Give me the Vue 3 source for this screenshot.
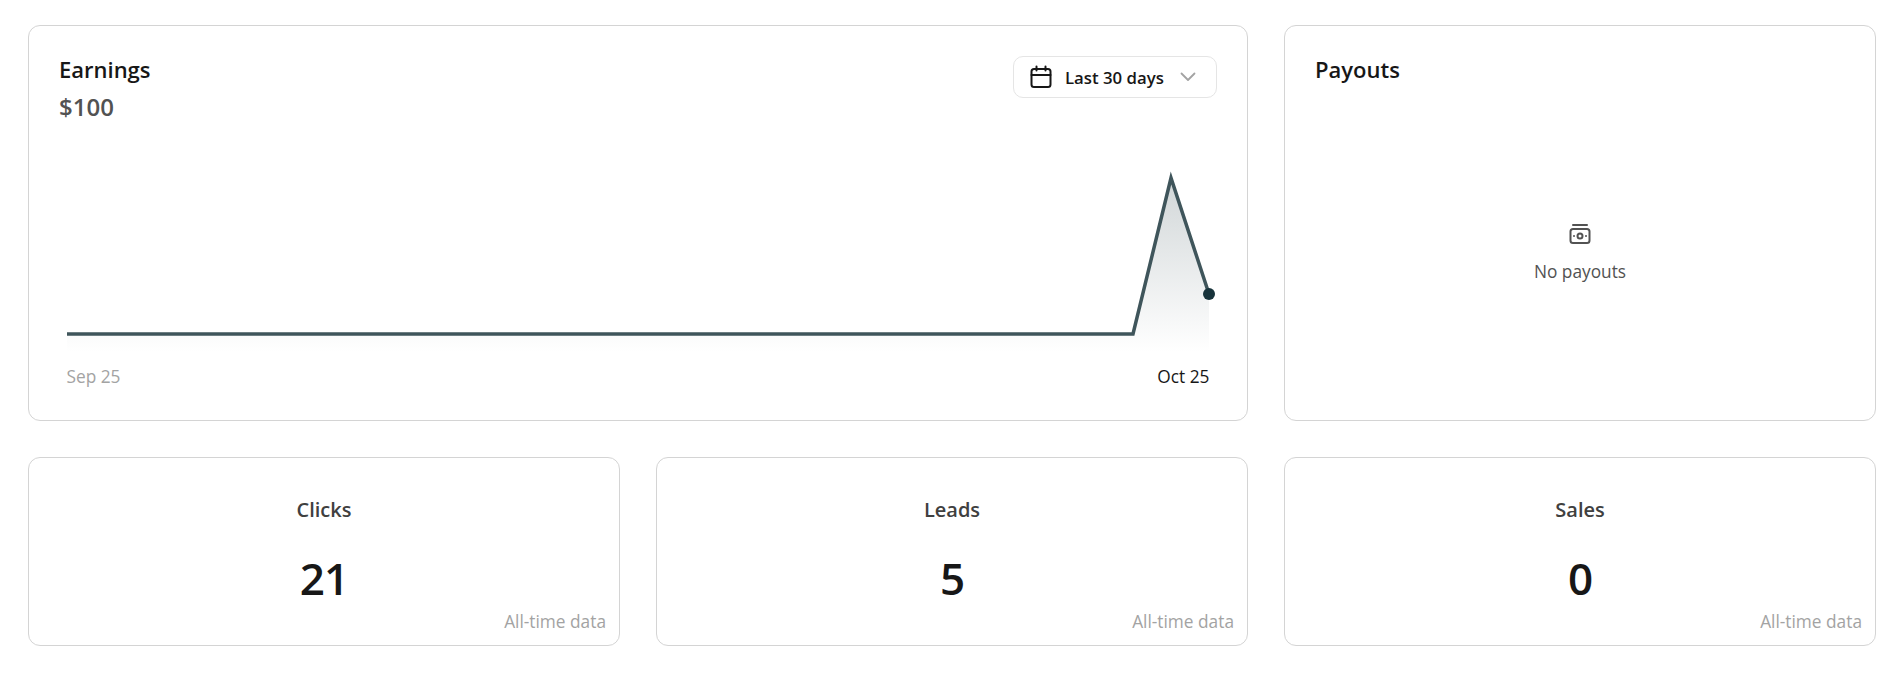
<template>
  <div class="page">
    <div class="grid">
      <section class="card earnings">
        <div class="earnings-head">
          <div>
            <h2 class="title">Earnings</h2>
            <div class="amount">$100</div>
          </div>
          <button class="range">
            <svg class="cal" width="24" height="24" viewBox="0 0 24 24" fill="none" stroke="#171717" stroke-width="2" stroke-linecap="round" stroke-linejoin="round">
              <rect x="2.5" y="4" width="19" height="18" rx="2.5" />
              <path d="M2.5 10h19M7.5 1.5v4M16.5 1.5v4" />
            </svg>
            <span>Last 30 days</span>
            <svg width="16" height="10" viewBox="0 0 16 10" fill="none" stroke="#a3a3a3" stroke-width="1.8" stroke-linecap="round" stroke-linejoin="round">
              <path d="M1.5 1.5 8 8l6.5-6.5" />
            </svg>
          </button>
        </div>
        <svg class="chart" width="1156" height="212" viewBox="0 0 1156 212">
          <defs>
            <linearGradient id="area" x1="0" y1="0" x2="0" y2="1">
              <stop offset="0" stop-color="#3f555b" stop-opacity="0.24" />
              <stop offset="1" stop-color="#3f555b" stop-opacity="0" />
            </linearGradient>
          </defs>
          <path :d="areaPath" fill="url(#area)" />
          <path :d="linePath" fill="none" stroke="#3f555b" stroke-width="3.5" />
          <circle cx="1142" cy="154" r="6" fill="#17333b" />
        </svg>
        <div class="axis">
          <span>Sep 25</span>
          <span class="axis-now">Oct 25</span>
        </div>
      </section>

      <section class="card payouts">
        <h2 class="title">Payouts</h2>
        <div class="empty">
          <svg width="24" height="24" viewBox="0 0 24 24" fill="none" stroke="#525252" stroke-width="2" stroke-linecap="round" stroke-linejoin="round">
            <path d="M5 3h14" />
            <rect x="2.5" y="7" width="19" height="14" rx="2.5" />
            <circle cx="12" cy="14" r="2.5" />
            <path d="M6 14h.01M18 14h.01" />
          </svg>
          <span>No payouts</span>
        </div>
      </section>

      <section v-for="stat in stats" :key="stat.label" class="card stat">
        <div class="stat-label">{{ stat.label }}</div>
        <div class="stat-value">{{ stat.value }}</div>
        <div class="stat-note">All-time data</div>
      </section>
    </div>
  </div>
</template>

<script setup>
const stats = [
  { label: 'Clicks', value: 21 },
  { label: 'Leads', value: 5 },
  { label: 'Sales', value: 0 }
]

const linePath = 'M0 194H1066L1104 38L1142 154'
const areaPath = 'M0 194H1066L1104 38L1142 154V212H0Z'
</script>

<style scoped>
.page {
  padding: 25px 28px 27px;
  font-family: "Open Sans", "Noto Sans", sans-serif;
  color: #171717;
}

.grid {
  display: grid;
  grid-template-columns: repeat(3, 1fr);
  gap: 36px;
}

.card {
  box-sizing: border-box;
  background: #fff;
  border: 1px solid #d4d4d4;
  border-radius: 12px;
}

.earnings {
  grid-column: span 2;
  height: 396px;
  padding: 29px 30px 0;
}

.earnings-head {
  display: flex;
  justify-content: space-between;
  align-items: flex-start;
  height: 85px;
}

.title {
  margin: 0;
  font-size: 22px;
  line-height: 29px;
  font-weight: 600;
}

.amount {
  margin-top: 8px;
  font-size: 24px;
  line-height: 30px;
  font-weight: 600;
  color: #525252;
}

.range {
  display: flex;
  align-items: center;
  box-sizing: border-box;
  width: 204px;
  height: 42px;
  margin-top: 1px;
  padding: 0 20px 0 15px;
  background: #fff;
  border: 1px solid #e5e5e5;
  border-radius: 10px;
  font-family: inherit;
  font-size: 16.8px;
  font-weight: 600;
  color: #171717;
  white-space: nowrap;
}

.range span {
  margin-left: 12px;
  margin-right: auto;
}

.chart {
  display: block;
  margin-left: 8px;
}

.axis {
  display: flex;
  justify-content: space-between;
  width: 1143px;
  margin: 14px 0 0 7.5px;
  font-size: 17.3px;
  line-height: 22px;
  color: #a3a3a3;
}

.axis-now {
  color: #171717;
}

.payouts {
  display: flex;
  flex-direction: column;
  height: 396px;
  padding: 29px 30px 0;
}

.empty {
  display: flex;
  flex-direction: column;
  align-items: center;
  gap: 15px;
  margin-top: 138px;
  font-size: 17.3px;
  line-height: 22px;
  color: #525252;
}

.stat {
  display: flex;
  flex-direction: column;
  align-items: center;
  height: 189px;
  padding: 39px 13px 0;
}

.stat-label {
  font-size: 20px;
  line-height: 26px;
  font-weight: 600;
  color: #404040;
}

.stat-value {
  margin-top: 25px;
  font-size: 44px;
  line-height: 60px;
  font-weight: 600;
  letter-spacing: -1px;
}

.stat-note {
  align-self: flex-end;
  margin-top: 3px;
  font-size: 17.3px;
  line-height: 22px;
  color: #a3a3a3;
}
</style>
